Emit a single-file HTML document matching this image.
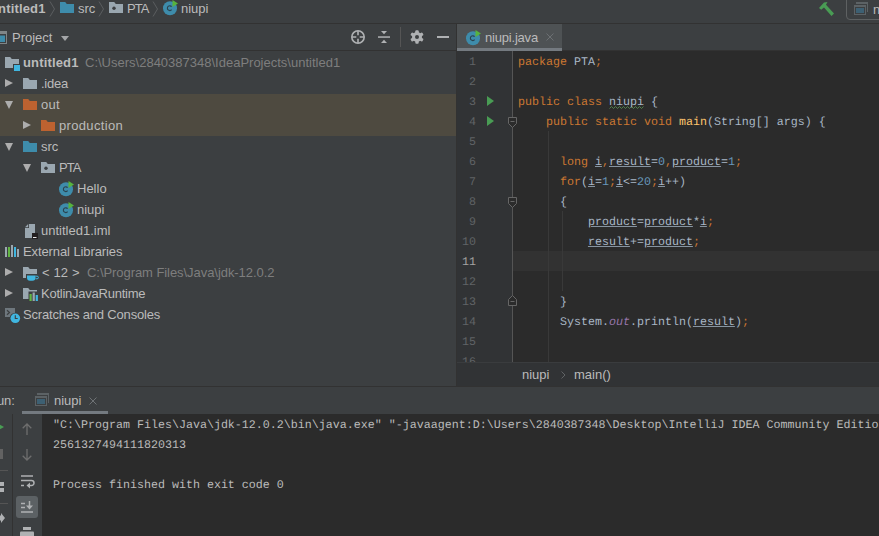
<!DOCTYPE html>
<html lang="en">
<head>
<meta charset="utf-8">
<title>niupi.java - untitled1</title>
<style>
*{box-sizing:border-box;margin:0;padding:0}
html,body{width:879px;height:536px;overflow:hidden;background:#3c3f41}
body{position:relative;font-family:"Liberation Sans",sans-serif;font-size:13px;color:#bbbbbb;-webkit-font-smoothing:antialiased}
.abs{position:absolute}
.hl{position:absolute;left:0;right:0;height:1px;background:#323232}
.t{position:absolute;white-space:nowrap;line-height:20px;height:20px}
svg{position:absolute;overflow:visible}
/* nav bar */
#nav{position:absolute;left:0;top:0;width:879px;height:23px}
/* project tree */
#tree{position:absolute;left:0;top:51px;width:456px;height:335px;overflow:hidden}
.row{position:absolute;left:0;width:457px;height:21px}
.row .t{top:0;line-height:21px;height:21px}
.dim{color:#7e7e7e}
.arr{position:absolute;width:0;height:0}
.arr.r{border-left:8px solid #adadad;border-top:4.75px solid transparent;border-bottom:4.75px solid transparent;margin-top:-0.25px}
.arr.d{border-top:8px solid #adadad;border-left:4.5px solid transparent;border-right:4.5px solid transparent;margin-left:1px;margin-top:-0.5px}
/* editor */
#ed{position:absolute;left:457px;top:51px;width:422px;height:311px;background:#2b2b2b;overflow:hidden}
#gut{position:absolute;left:0;top:0;width:55px;height:311px;background:#313335}
#gline{position:absolute;left:55px;top:0;width:1px;height:311px;background:#555555}
.ln{position:absolute;left:0;width:19px;text-align:right;margin-top:1px;font-family:"Liberation Mono",monospace;font-size:11.67px;text-rendering:geometricPrecision;color:#606366;line-height:20px;height:20px}
.cl{position:absolute;left:61px;white-space:pre;margin-top:1px;font-family:"Liberation Mono",monospace;font-size:11.67px;text-rendering:geometricPrecision;color:#a9b7c6;line-height:20px;height:20px}
.k{color:#cc7832}.n{color:#6897bb}.f{color:#ffc66d}.p{color:#9876aa;font-style:italic}
.u{text-decoration:underline;text-underline-offset:1px;text-decoration-thickness:1px;text-decoration-color:#8794a1}
.w{color:#a9b7c6}
.ig{position:absolute;width:1px;background:#393939}
.fold{position:absolute;left:51px}
.run{position:absolute;left:30px;width:0;height:0;border-left:7px solid #499c54;border-top:5px solid transparent;border-bottom:5px solid transparent}
/* console */
#con{position:absolute;left:42px;top:414px;width:837px;height:122px;background:#2b2b2b;overflow:hidden}
.co{position:absolute;left:11px;white-space:pre;margin-top:1px;font-family:"Liberation Mono",monospace;font-size:11.67px;text-rendering:geometricPrecision;color:#bbbbbb;line-height:20px;height:20px}
</style>
</head>
<body>

<!-- ===== navigation bar ===== -->
<div id="nav">
  <div class="t" style="left:-10px;top:-1px;font-weight:bold;letter-spacing:0.15px">untitled1</div>
  <svg style="left:49px;top:1px" width="7" height="16" viewBox="0 0 7 16"><path d="M1 0.5 L5.5 8 L1 15.5" fill="none" stroke="#5b5e60" stroke-width="1"/></svg>
  <svg style="left:60px;top:2px" width="14" height="11" viewBox="0 0 14 11"><path d="M0 0h5.2l1.6 2H14v9H0z" fill="#3e8cab"/></svg>
  <div class="t" style="left:78px;top:-1px">src</div>
  <svg style="left:98px;top:1px" width="7" height="16" viewBox="0 0 7 16"><path d="M1 0.5 L5.5 8 L1 15.5" fill="none" stroke="#5b5e60" stroke-width="1"/></svg>
  <svg style="left:109px;top:2px" width="14" height="11" viewBox="0 0 14 11"><path d="M0 0h5.2l1.6 2H14v9H0z" fill="#9aa7b0"/><circle cx="5" cy="6.3" r="1.7" fill="#3c3f41"/></svg>
  <div class="t" style="left:127px;top:-1px;letter-spacing:-0.9px">PTA</div>
  <svg style="left:152px;top:1px" width="7" height="16" viewBox="0 0 7 16"><path d="M1 0.5 L5.5 8 L1 15.5" fill="none" stroke="#5b5e60" stroke-width="1"/></svg>
  <svg style="left:163px;top:0px" width="16" height="16" viewBox="0 0 16 16"><circle cx="7" cy="8.2" r="7" fill="#3e8cab"/><path d="M8.64 6.66A2.4 2.4 0 1 0 8.64 9.74" fill="none" stroke="#2b434f" stroke-width="1.15"/><path d="M9.5 0L15 3.4L9.5 7z" fill="#57b33e"/></svg>
  <div class="t" style="left:181px;top:-1px">niupi</div>
  <!-- hammer -->
  <svg style="left:818px;top:1px" width="17" height="16" viewBox="0 0 17 16"><path d="M1 7 L6 1.5 L9.5 1 L8 3.8 L16 12.5 L13.5 15 L6 6.5 L3.2 8.8z" fill="#499c54"/></svg>
  <!-- run configuration box -->
  <div class="abs" style="left:846px;top:-6px;width:60px;height:26px;border:1px solid #5e6162;border-radius:4px"></div>
  <svg style="left:854px;top:2px" width="14" height="13" viewBox="0 0 14 13"><g fill="#5c6265"><rect x="2" y="0" width="12" height="2"/><rect x="13" y="0" width="1" height="10"/><rect x="0" y="3" width="12" height="2"/><rect x="0" y="3" width="1" height="10"/><rect x="11" y="3" width="1" height="10"/><rect x="0" y="12" width="12" height="1"/></g><rect x="2" y="6" width="8" height="5" fill="#3d6073"/></svg>
  <div class="t" style="left:873px;top:0px">niupi</div>
</div>
<div class="hl" style="top:23px"></div>

<!-- ===== project tool window header ===== -->
<div id="ph" class="abs" style="left:0;top:24px;width:457px;height:26px">
  <svg style="left:-6px;top:7px" width="13" height="13" viewBox="0 0 13 13"><rect x="0.5" y="0.5" width="12" height="12" fill="none" stroke="#7f8587"/><rect x="0" y="0" width="13" height="3" fill="#7f8587"/><rect x="2" y="4.5" width="9" height="6.5" fill="#3e8cab"/></svg>
  <div class="t" style="left:12px;top:4px">Project</div>
  <div class="arr" style="left:61px;top:12px;border-top:5px solid #a4a6a8;border-left:4px solid transparent;border-right:4px solid transparent"></div>
  <!-- locate -->
  <svg style="left:351px;top:6px" width="14" height="14" viewBox="0 0 14 14"><circle cx="7" cy="7" r="6.200" fill="none" stroke="#afb1b3" stroke-width="1.600"/><path d="M7 1v4.300M7 8.700v4.300M1 7h4.300M8.700 7h4.300" stroke="#afb1b3" stroke-width="1.600"/></svg>
  <!-- collapse all -->
  <svg style="left:378px;top:7px" width="12" height="12" viewBox="0 0 12 12"><rect x="0" y="5.3" width="12" height="1.5" fill="#afb1b3"/><path d="M3 0h6L6 3.3z" fill="#afb1b3"/><path d="M3 12h6L6 8.7z" fill="#afb1b3"/></svg>
  <div class="abs" style="left:400px;top:3px;width:1px;height:20px;background:#555555"></div>
  <!-- gear -->
  <svg style="left:410px;top:6px" width="14" height="14" viewBox="0 0 14 14"><g fill="#afb1b3"><circle cx="7" cy="7" r="5"/><rect x="5.300" y="0.200" width="3.400" height="13.600" rx="1"/><rect x="5.300" y="0.200" width="3.400" height="13.600" rx="1" transform="rotate(60 7 7)"/><rect x="5.300" y="0.200" width="3.400" height="13.600" rx="1" transform="rotate(120 7 7)"/></g><circle cx="7" cy="7" r="2" fill="#3c3f41"/></svg>
  <div class="abs" style="left:437px;top:12px;width:12px;height:2px;background:#afb1b3"></div>
</div>
<div class="abs" style="left:0;top:50px;width:879px;height:1px;background:#323232"></div>

<div class="abs" style="left:456px;top:24px;width:1px;height:363px;background:#323232"></div>

<!-- ===== editor tabs ===== -->
<div class="abs" style="left:457px;top:24px;width:105px;height:27px;background:#4e5254">
  <svg style="left:9px;top:6px" width="16" height="16" viewBox="0 0 16 16"><circle cx="7" cy="8.2" r="7" fill="#3e8cab"/><path d="M8.64 6.66A2.4 2.4 0 1 0 8.64 9.74" fill="none" stroke="#2b434f" stroke-width="1.15"/><path d="M9.5 0L15 3.4L9.5 7z" fill="#57b33e"/></svg>
  <div class="t" style="left:28px;top:4px;letter-spacing:-0.2px">niupi.java</div>
  <svg style="left:89px;top:9px" width="8" height="8" viewBox="0 0 8 8"><path d="M0.5 0.5l7 7M7.5 0.5l-7 7" stroke="#6c7073" stroke-width="1"/></svg>
  <div class="abs" style="left:0;top:24px;width:105px;height:3px;background:#747a80"></div>
</div>

<!-- ===== project tree ===== -->
<div id="tree">
  <div class="abs" style="left:0;top:43px;width:457px;height:42px;background:#4e4a40"></div>

  <div class="row" style="top:1px">
    <svg style="left:5px;top:5px" width="16" height="14" viewBox="0 0 16 14"><path d="M0 0h5.2l1.6 2H14v9H0z" fill="#9aa7b0"/><rect x="8" y="7" width="8" height="7" fill="#3c3f41"/><rect x="9" y="8" width="6" height="6" fill="#40b6e0"/></svg>
    <div class="t" style="left:23px;font-weight:bold;letter-spacing:0.15px">untitled1</div>
    <div class="t dim" style="left:85px">C:\Users\2840387348\IdeaProjects\untitled1</div>
  </div>
  <div class="row" style="top:22px">
    <div class="arr r" style="left:5px;top:6px"></div>
    <svg style="left:23px;top:5px" width="14" height="11" viewBox="0 0 14 11"><path d="M0 0h5.2l1.6 2H14v9H0z" fill="#9aa7b0"/></svg>
    <div class="t" style="left:41px;letter-spacing:-0.24px">.idea</div>
  </div>
  <div class="row" style="top:43px">
    <div class="arr d" style="left:4px;top:7px"></div>
    <svg style="left:23px;top:5px" width="14" height="11" viewBox="0 0 14 11"><path d="M0 0h5.2l1.6 2H14v9H0z" fill="#bd6230"/></svg>
    <div class="t" style="left:41px;letter-spacing:0.25px">out</div>
  </div>
  <div class="row" style="top:64px">
    <div class="arr r" style="left:23px;top:6px"></div>
    <svg style="left:41px;top:5px" width="14" height="11" viewBox="0 0 14 11"><path d="M0 0h5.2l1.6 2H14v9H0z" fill="#bd6230"/></svg>
    <div class="t" style="left:59px;letter-spacing:0.33px">production</div>
  </div>
  <div class="row" style="top:85px">
    <div class="arr d" style="left:4px;top:7px"></div>
    <svg style="left:23px;top:5px" width="14" height="11" viewBox="0 0 14 11"><path d="M0 0h5.2l1.6 2H14v9H0z" fill="#3e8cab"/></svg>
    <div class="t" style="left:41px">src</div>
  </div>
  <div class="row" style="top:106px">
    <div class="arr d" style="left:22px;top:7px"></div>
    <svg style="left:41px;top:5px" width="14" height="11" viewBox="0 0 14 11"><path d="M0 0h5.2l1.6 2H14v9H0z" fill="#9aa7b0"/><circle cx="5" cy="6.3" r="1.7" fill="#3c3f41"/></svg>
    <div class="t" style="left:59px;letter-spacing:-0.9px">PTA</div>
  </div>
  <div class="row" style="top:127px">
    <svg style="left:59px;top:3px" width="16" height="16" viewBox="0 0 16 16"><circle cx="7" cy="8.2" r="7" fill="#3e8cab"/><path d="M8.64 6.66A2.4 2.4 0 1 0 8.64 9.74" fill="none" stroke="#2b434f" stroke-width="1.15"/><path d="M9.5 0L15 3.4L9.5 7z" fill="#57b33e"/></svg>
    <div class="t" style="left:77px">Hello</div>
  </div>
  <div class="row" style="top:148px">
    <svg style="left:59px;top:3px" width="16" height="16" viewBox="0 0 16 16"><circle cx="7" cy="8.2" r="7" fill="#3e8cab"/><path d="M8.64 6.66A2.4 2.4 0 1 0 8.64 9.74" fill="none" stroke="#2b434f" stroke-width="1.15"/><path d="M9.5 0L15 3.4L9.5 7z" fill="#57b33e"/></svg>
    <div class="t" style="left:77px">niupi</div>
  </div>
  <div class="row" style="top:169px">
    <svg style="left:25px;top:4px" width="13" height="15" viewBox="0 0 13 15"><path d="M4 0h6v14H0V4h4z" fill="#9aa7b0"/><path d="M0 3.200L3.200 0v3.200z" fill="#9aa7b0"/><rect x="7" y="9" width="6" height="6" fill="#231f20"/><rect x="8" y="13" width="3.500" height="1" fill="#e8e8e8"/></svg>
    <div class="t" style="left:41px">untitled1.iml</div>
  </div>
  <div class="row" style="top:190px">
    <svg style="left:5px;top:4px" width="14" height="12" viewBox="0 0 14 12"><rect x="0" y="2" width="2" height="10" fill="#9aa7b0"/><rect x="3" y="2" width="2" height="10" fill="#62b543"/><rect x="6" y="0" width="2" height="12" fill="#9aa7b0"/><rect x="9" y="2" width="2" height="10" fill="#40b6e0"/><rect x="12" y="4" width="2" height="8" fill="#9aa7b0"/></svg>
    <div class="t" style="left:23px;letter-spacing:-0.1px">External Libraries</div>
  </div>
  <div class="row" style="top:211px">
    <div class="arr r" style="left:5px;top:6px"></div>
    <svg style="left:23px;top:5px" width="16" height="14" viewBox="0 0 16 14"><path d="M0 0h5.2l1.6 2H14v9H0z" fill="#9aa7b0"/><rect x="3" y="7" width="12" height="7" fill="#3c3f41"/><path d="M4 8.5h8.5v2.2a3 3 0 0 1-3 3h-2.500a3 3 0 0 1-3-3z" fill="#40b6e0"/><path d="M12.5 9.2h1.6a1 1 0 0 1 0 2.600h-1.600" fill="none" stroke="#40b6e0" stroke-width="1"/></svg>
    <div class="t" style="left:42px;letter-spacing:-0.1px;word-spacing:0.6px">&lt; 12 &gt;</div>
    <div class="t dim" style="left:87px;letter-spacing:-0.06px">C:\Program Files\Java\jdk-12.0.2</div>
  </div>
  <div class="row" style="top:232px">
    <div class="arr r" style="left:5px;top:6px"></div>
    <svg style="left:23px;top:5px" width="16" height="14" viewBox="0 0 16 14"><path d="M0 0h5.2l1.6 2H14v9H0z" fill="#9aa7b0"/><rect x="5.500" y="3.500" width="10.500" height="10.500" fill="#3c3f41"/><rect x="6.500" y="6" width="2.200" height="7" fill="#62b543"/><rect x="9.600" y="4.500" width="2.200" height="8.500" fill="#9aa7b0"/><rect x="12.700" y="7" width="2.200" height="6" fill="#40b6e0"/></svg>
    <div class="t" style="left:41px;letter-spacing:-0.24px">KotlinJavaRuntime</div>
  </div>
  <div class="row" style="top:253px">
    <svg style="left:5px;top:3.5px" width="16" height="16" viewBox="0 0 16 16"><rect x="0" y="0" width="10" height="9" fill="#6e777d"/><path d="M2 2.200l2.500 2.300L2 6.800" fill="none" stroke="#3c3f41" stroke-width="1.200"/><circle cx="10.300" cy="10.300" r="5.600" fill="#3c3f41"/><circle cx="10.300" cy="10.300" r="4.800" fill="#40b6e0"/><path d="M10.300 7.300v3.200h2.400" fill="none" stroke="#3c3f41" stroke-width="1.100"/></svg>
    <div class="t" style="left:23px;letter-spacing:-0.17px">Scratches and Consoles</div>
  </div>
</div>

<!-- ===== editor ===== -->
<div id="ed">
  <div id="gut"></div>
  <div class="abs" style="left:56px;top:200px;width:366px;height:20px;background:#323232"></div>
  <div id="gline"></div>
  <div class="ig" style="left:91px;top:80px;height:231px"></div>
  <div class="ig" style="left:105px;top:160px;height:80px"></div>

  <div class="ln" style="top:0px">1</div>
  <div class="ln" style="top:20px">2</div>
  <div class="ln" style="top:40px">3</div>
  <div class="ln" style="top:60px">4</div>
  <div class="ln" style="top:80px">5</div>
  <div class="ln" style="top:100px">6</div>
  <div class="ln" style="top:120px">7</div>
  <div class="ln" style="top:140px">8</div>
  <div class="ln" style="top:160px">9</div>
  <div class="ln" style="top:180px">10</div>
  <div class="ln" style="top:200px;color:#a4a3a3">11</div>
  <div class="ln" style="top:220px">12</div>
  <div class="ln" style="top:240px">13</div>
  <div class="ln" style="top:260px">14</div>
  <div class="ln" style="top:280px">15</div>
  <div class="ln" style="top:300px">16</div>

  <div class="run" style="top:45px"></div>
  <div class="run" style="top:65px"></div>

  <svg class="fold" style="top:66px" width="9" height="11" viewBox="0 0 9 11"><path d="M0.500 0.500h8v6l-4 4l-4-4z" fill="#2b2b2b" stroke="#666666"/><path d="M2.500 4.500h4" stroke="#666666"/></svg>
  <svg class="fold" style="top:146px" width="9" height="11" viewBox="0 0 9 11"><path d="M0.500 0.500h8v6l-4 4l-4-4z" fill="#2b2b2b" stroke="#666666"/><path d="M2.500 4.500h4" stroke="#666666"/></svg>
  <svg class="fold" style="top:244px" width="9" height="11" viewBox="0 0 9 11"><path d="M0.500 10.500h8v-6l-4-4l-4 4z" fill="#2b2b2b" stroke="#666666"/><path d="M2.500 6.500h4" stroke="#666666"/></svg>

<svg style="left:152px;top:55px" width="35" height="3" viewBox="0 0 35 3"><path d="M0.5 2.5L2.5 0.5L4.5 2.5L6.5 0.5L8.5 2.5L10.5 0.5L12.5 2.5L14.5 0.5L16.5 2.5L18.5 0.5L20.5 2.5L22.5 0.5L24.5 2.5L26.5 0.5L28.5 2.5L30.5 0.5L32.5 2.5L34.5 0.5" fill="none" stroke="#5a9653" stroke-width="0.8"/></svg>
  <div class="cl" style="top:0px"><span class="k">package</span> PTA<span class="k">;</span></div>
  <div class="cl" style="top:40px"><span class="k">public class</span> <span class="w">niupi</span> {</div>
  <div class="cl" style="top:60px">    <span class="k">public static void</span> <span class="f">main</span>(String[] args) {</div>
  <div class="cl" style="top:100px">      <span class="k">long</span> <span class="u">i</span><span class="k">,</span><span class="u">result</span>=<span class="n">0</span><span class="k">,</span><span class="u">product</span>=<span class="n">1</span><span class="k">;</span></div>
  <div class="cl" style="top:120px">      <span class="k">for</span>(<span class="u">i</span>=<span class="n">1</span><span class="k">;</span><span class="u">i</span>&lt;=<span class="n">20</span><span class="k">;</span><span class="u">i</span>++)</div>
  <div class="cl" style="top:140px">      {</div>
  <div class="cl" style="top:160px">          <span class="u">product</span>=<span class="u">product</span>*<span class="u">i</span><span class="k">;</span></div>
  <div class="cl" style="top:180px">          <span class="u">result</span>+=<span class="u">product</span><span class="k">;</span></div>
  <div class="cl" style="top:240px">      }</div>
  <div class="cl" style="top:260px">      System.<span class="p">out</span>.println(<span class="u">result</span>)<span class="k">;</span></div>
</div>

<!-- ===== editor breadcrumbs ===== -->
<div class="abs" style="left:457px;top:362px;width:422px;height:24px;background:#313335;border-top:1px solid #3a3c3e">
  <div class="t" style="left:65px;top:2px">niupi</div>
  <svg style="left:104px;top:8px" width="5" height="8" viewBox="0 0 5 8"><path d="M0.500 0.500L4 4L0.500 7.500" fill="none" stroke="#606365" stroke-width="1"/></svg>
  <div class="t" style="left:117px;top:2px">main()</div>
</div>
<div class="hl" style="top:386px"></div>

<!-- ===== run tool window ===== -->
<div class="abs" style="left:0;top:387px;width:879px;height:27px">
  <div class="t" style="left:-12.5px;top:4px">Run:</div>
  <svg style="left:35px;top:6px" width="14" height="13" viewBox="0 0 14 13"><g fill="#5c6265"><rect x="2" y="0" width="12" height="2"/><rect x="13" y="0" width="1" height="10"/><rect x="0" y="3" width="12" height="2"/><rect x="0" y="3" width="1" height="10"/><rect x="11" y="3" width="1" height="10"/><rect x="0" y="12" width="12" height="1"/></g><rect x="2" y="6" width="8" height="5" fill="#3d6073"/></svg>
  <div class="t" style="left:54px;top:4px">niupi</div>
  <svg style="left:89px;top:10px" width="8" height="8" viewBox="0 0 8 8"><path d="M0.500 0.500l7 7M7.500 0.500l-7 7" stroke="#6e7275" stroke-width="1"/></svg>
  <div class="abs" style="left:22px;top:24px;width:86px;height:3px;background:#747a80"></div>
</div>

<!-- left tool strips -->
<div class="abs" style="left:12px;top:414px;width:1px;height:122px;background:#323232"></div>
<div class="abs" style="left:0;top:414px;width:12px;height:122px;overflow:hidden">
  <div class="abs" style="left:-3px;top:9px;width:0;height:0;border-left:7px solid #499c54;border-top:4.500px solid transparent;border-bottom:4.500px solid transparent"></div>
  <div class="abs" style="left:-7px;top:35px;width:10px;height:10px;background:#626262"></div>
  <div class="abs" style="left:0;top:56px;width:8px;height:1px;background:#555555"></div>
  <div class="abs" style="left:-8px;top:68px;width:12px;height:4px;background:#afb1b3"></div>
  <div class="abs" style="left:-8px;top:74px;width:12px;height:4px;background:#afb1b3"></div>
  <div class="abs" style="left:0;top:89px;width:8px;height:1px;background:#555555"></div>
  <svg style="left:-8px;top:98px" width="13" height="12" viewBox="0 0 13 12"><path d="M0 3.500h9V1l4 5l-4 5V8.500H0z" fill="#afb1b3"/></svg>
</div>
<div class="abs" style="left:13px;top:414px;width:29px;height:122px;overflow:hidden">
  <!-- up -->
  <svg style="left:9px;top:9px" width="10" height="12" viewBox="0 0 10 12"><path d="M5 12V1M0.700 5.300L5 1l4.300 4.300" fill="none" stroke="#6e6e6e" stroke-width="1.300"/></svg>
  <!-- down -->
  <svg style="left:9px;top:35px" width="10" height="12" viewBox="0 0 10 12"><path d="M5 0v11M0.700 6.700L5 11l4.300-4.300" fill="none" stroke="#6e6e6e" stroke-width="1.300"/></svg>
  <!-- soft wrap -->
  <svg style="left:8px;top:61px" width="14" height="14" viewBox="0 0 14 14"><path d="M0 1h12" stroke="#afb1b3" stroke-width="1.500" fill="none"/><path d="M0 5.500h10.500a2.500 2.500 0 0 1 0 5H8" stroke="#afb1b3" stroke-width="1.500" fill="none"/><path d="M9 7.500L5.500 10.500L9 13.500z" fill="#afb1b3"/><path d="M0 10.500h3" stroke="#afb1b3" stroke-width="1.500"/></svg>
  <!-- scroll to end (selected) -->
  <div class="abs" style="left:3px;top:82px;width:22px;height:22px;background:#5c6164;border-radius:3px"></div>
  <svg style="left:8px;top:87px" width="13" height="12" viewBox="0 0 13 12"><path d="M0 2.500h4M0 6.500h4M0 11h12" stroke="#afb1b3" stroke-width="1.500" fill="none"/><path d="M8.500 0v6" stroke="#afb1b3" stroke-width="1.500"/><path d="M5 4.500h7L8.500 8.500z" fill="#afb1b3"/></svg>
  <!-- print -->
  <svg style="left:7px;top:113px" width="14" height="12" viewBox="0 0 14 12"><rect x="3" y="0" width="8" height="3" fill="#afb1b3"/><rect x="0" y="4.500" width="14" height="8" rx="1" fill="#afb1b3"/></svg>
</div>

<!-- console -->
<div id="con">
  <div class="co" style="top:0px">"C:\Program Files\Java\jdk-12.0.2\bin\java.exe" "-javaagent:D:\Users\2840387348\Desktop\IntelliJ IDEA Community Edition 2019.2.3\lib\idea_rt.jar=51234:D:\Users\2840387348\Desktop\IntelliJ IDEA Community Edition 2019.2.3\bin" -Dfile.encoding=UTF-8 -classpath C:\Users\2840387348\IdeaProjects\untitled1\out\production\untitled1 PTA.niupi</div>
  <div class="co" style="top:20px">2561327494111820313</div>
  <div class="co" style="top:60px">Process finished with exit code 0</div>
</div>

</body>
</html>
